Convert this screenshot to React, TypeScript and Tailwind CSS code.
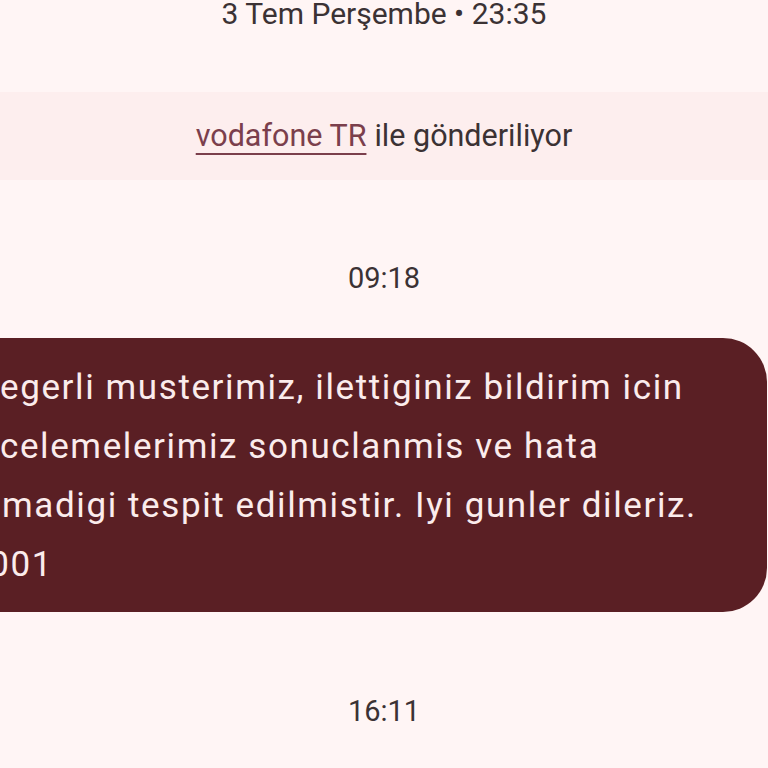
export default function App() {
  const lines = [
    { text: "egerli musterimiz, ilettiginiz bildirim icin", offset: "ml-[0px]" },
    { text: "celemelerimiz sonuclanmis ve hata", offset: "ml-[0px]" },
    { text: "madigi tespit edilmistir. Iyi gunler dileriz.", offset: "ml-[2px]" },
    { text: "0001", offset: "ml-[-32px]" },
  ];

  return (
    <div
      className="h-[768px] w-[768px] overflow-hidden bg-[#fff5f5] text-[#3b3234]"
      style={{ fontFamily: "Roboto, 'Noto Sans', sans-serif" }}
    >
      <div className="text-center text-[30px] leading-[28px]">3 Tem Perşembe • 23:35</div>

      <div className="mt-[64px] flex h-[88px] items-center justify-center bg-[#fdeeee] text-[30.5px]">
        <span className="text-[#7b3f4c] underline decoration-[2px] underline-offset-[7px]">vodafone TR</span>
        <span className="ml-[8px]">ile gönderiliyor</span>
      </div>

      <div className="mt-[78px] text-center text-[29px] leading-[40px]">09:18</div>

      <div className="mt-[40px] ml-[-40px] mr-[1px] rounded-r-[44px] bg-[#5a1f24] pt-[20px] pb-[18px] pl-[40px] text-[35px] leading-[59px] tracking-[1.6px] text-[#fbecec]">
        {lines.map((l, i) => (
          <div key={i} className={`whitespace-nowrap ${l.offset}`}>
            {l.text}
          </div>
        ))}
      </div>

      <div className="mt-[79px] text-center text-[29px] leading-[40px]">16:11</div>
    </div>
  );
}
